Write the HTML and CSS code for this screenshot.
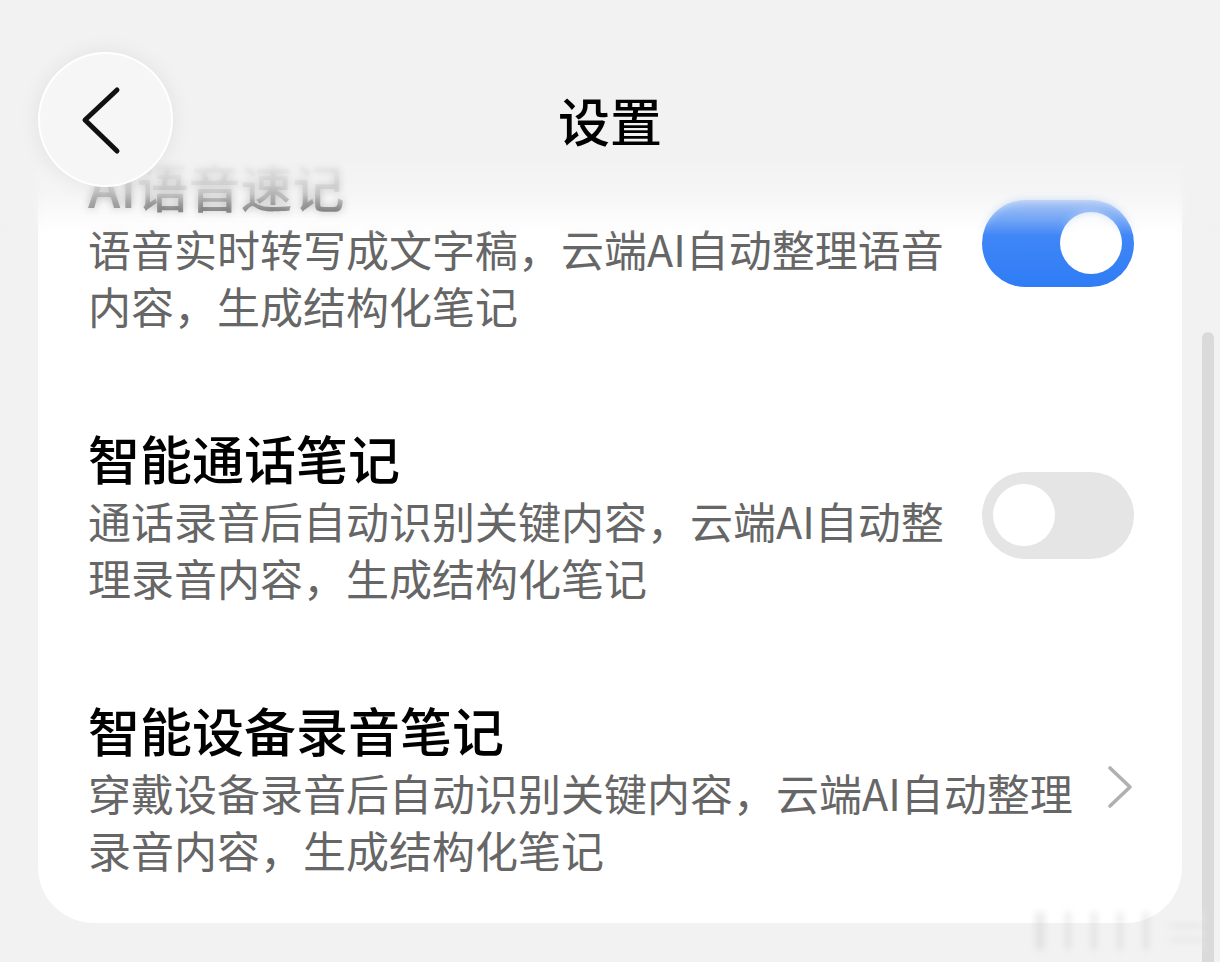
FILE: index.html
```html
<!DOCTYPE html>
<html lang="zh-CN">
<head>
<meta charset="utf-8">
<title>设置</title>
<link rel="stylesheet" href="styles.css">
</head>
<body>
<div class="screen">
  <main class="content">
    <section class="card">
      <div class="item">
        <div class="text">
          <div class="item-title">AI语音速记</div>
          <div class="item-desc">语音实时转写成文字稿，云端AI自动整理语音内容，生成结构化笔记</div>
        </div>
        <span class="switch on"><span class="knob"></span></span>
      </div>
      <div class="item">
        <div class="text">
          <div class="item-title">智能通话笔记</div>
          <div class="item-desc">通话录音后自动识别关键内容，云端AI自动整理录音内容，生成结构化笔记</div>
        </div>
        <span class="switch"><span class="knob"></span></span>
      </div>
      <div class="item item-link">
        <div class="text">
          <div class="item-title">智能设备录音笔记</div>
          <div class="item-desc">穿戴设备录音后自动识别关键内容，云端AI自动整理录音内容，生成结构化笔记</div>
        </div>
        <span class="chevron">
          <svg width="36" height="44" viewBox="0 0 36 44"><polyline points="12,3 32,22 12,41" fill="none" stroke="#b0b0b0" stroke-width="3.6" stroke-linecap="round" stroke-linejoin="round"/></svg>
        </span>
      </div>
    </section>
  </main>

  <div class="frost"></div>
  <header class="topbar">
    <button class="back" aria-label="返回">
      <svg width="135" height="135" viewBox="0 0 135 135"><polyline points="79,38 47,68 79,99" fill="none" stroke="#111" stroke-width="5" stroke-linecap="round" stroke-linejoin="round"/></svg>
    </button>
    <h1 class="title">设置</h1>
    <span></span>
  </header>

  <div class="scrollbar"></div>
  <div class="watermark">
    <span class="wm w1"></span><span class="wm w2"></span><span class="wm w3"></span><span class="wm w4"></span><span class="wm w5"></span><span class="wm w6"></span>
  </div>
</div>
</body>
</html>
```

FILE: styles.css
```css
html, body {
  margin: 0;
  padding: 0;
}
body {
  background: #f2f2f2;
  font-family: "Noto Sans CJK SC", "Noto Sans", sans-serif;
  color: #000;
}
.screen {
  position: relative;
  width: 1220px;
  height: 962px;
  overflow: hidden;
}
.content {
  padding-top: 107px;
}
.card {
  margin: 0 38px;
  background: #fff;
  border-radius: 56px;
}
.item {
  display: flex;
  align-items: center;
  gap: 32px;
  padding: 45px 48px 45px 50px;
}
.item-link {
  gap: 24px;
}
.text {
  flex: 1;
  min-width: 0;
}
.item-title {
  font-size: 52px;
  line-height: 68px;
  font-weight: 500;
  color: #000;
  white-space: nowrap;
}
.item-desc {
  font-size: 43px;
  line-height: 57px;
  color: #666;
}
.switch {
  flex: none;
  width: 152px;
  height: 87px;
  border-radius: 44px;
  background: #e5e5e5;
  display: flex;
  align-items: center;
  justify-content: flex-start;
  padding: 0 11px;
  box-sizing: border-box;
}
.switch.on {
  background: linear-gradient(#4b8ef8, #2f7cf5);
  justify-content: flex-end;
  padding: 0 12px;
}
.knob {
  width: 62px;
  height: 62px;
  border-radius: 50%;
  background: #fff;
}
.chevron {
  flex: none;
  width: 36px;
  height: 44px;
  display: flex;
}
.frost {
  position: absolute;
  left: 0;
  top: 0;
  right: 0;
  height: 236px;
  background: #f2f2f2;
  backdrop-filter: blur(4px);
  -webkit-mask-image: linear-gradient(to bottom, #000 0, #000 155px, rgba(0,0,0,0.72) 192px, rgba(0,0,0,0.38) 212px, transparent 236px);
  mask-image: linear-gradient(to bottom, #000 0, #000 155px, rgba(0,0,0,0.72) 192px, rgba(0,0,0,0.38) 212px, transparent 236px);
}
.topbar {
  position: absolute;
  left: 0;
  top: 52px;
  right: 0;
  height: 135px;
  display: grid;
  grid-template-columns: 1fr auto 1fr;
  align-items: center;
  padding-left: 38px;
  padding-right: 38px;
}
.back {
  width: 135px;
  height: 135px;
  border-radius: 50%;
  border: 2px solid rgba(255, 255, 255, 0.95);
  background: #f6f6f6;
  box-shadow: 0 0 22px rgba(0, 0, 0, 0.07);
  padding: 0;
  margin: 0;
  display: flex;
  align-items: center;
  justify-content: center;
  box-sizing: border-box;
}
.back svg {
  display: block;
  flex: none;
}
.title {
  margin: 0;
  font-size: 52px;
  line-height: 68px;
  font-weight: 500;
  color: #000;
}
.scrollbar {
  position: absolute;
  right: 6px;
  top: 332px;
  bottom: -20px;
  width: 12px;
  border-radius: 6px;
  background: #dadada;
}
.watermark {
  position: absolute;
  left: 1035px;
  top: 912px;
  width: 170px;
  height: 38px;
  display: flex;
  align-items: stretch;
  gap: 20px;
  filter: blur(3px);
  opacity: 0.35;
}
.wm {
  display: block;
  background: #c8c8c8;
  width: 6px;
}
.w1 { width: 10px; }
.w6 { flex: 1; background: linear-gradient(#f2f2f2 0, #f2f2f2 12px, #d0d0d0 12px, #d0d0d0 16px, #f2f2f2 16px, #f2f2f2 26px, #d0d0d0 26px, #d0d0d0 30px, #f2f2f2 30px); }
```
